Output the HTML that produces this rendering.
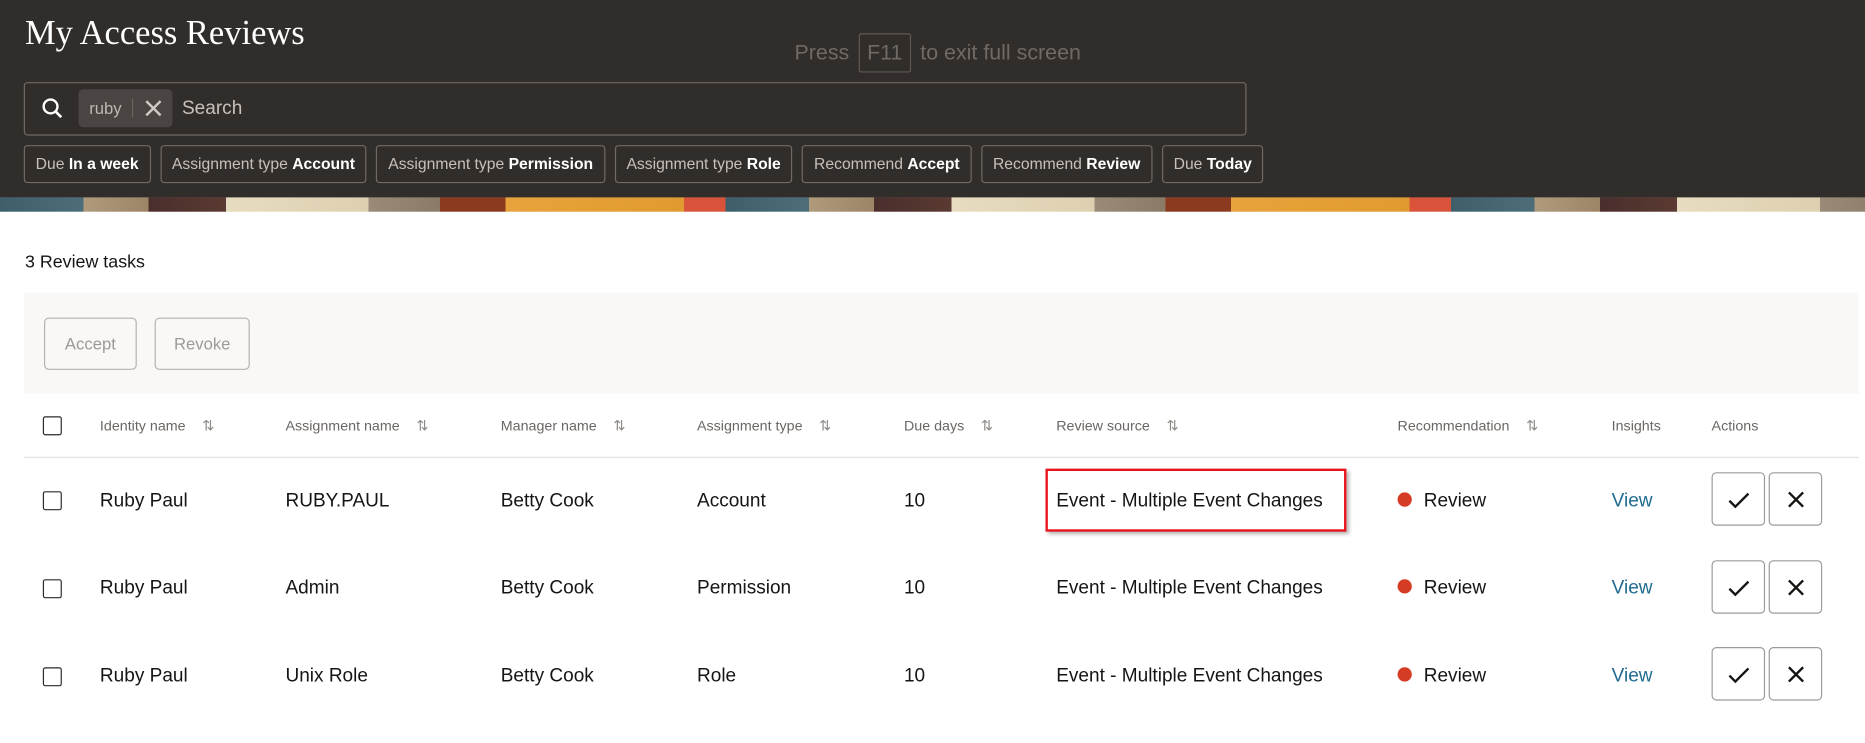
<!DOCTYPE html>
<html><head><meta charset="utf-8"><style>
html,body{margin:0;padding:0;background:#fff;overflow:hidden}
#w{width:1568px;height:625px;transform:scale(1.18941);transform-origin:0 0;position:relative;font-family:"Liberation Sans",sans-serif}
.hdr{position:absolute;left:0;top:0;width:1568px;height:166px;background:#312d2a}
.title{position:absolute;left:21px;top:12px;font-family:"Liberation Serif",serif;font-size:29px;color:#fff}
.press{position:absolute;left:668px;top:28px;font-size:18px;color:#6f6a66}
.press span{display:inline-block;border:1px solid #5e5955;padding:5px 6px;margin:0 8px;border-radius:2px}
.search{position:absolute;left:20px;top:69px;width:1026px;height:43px;border:1px solid #6f6a66;border-radius:3px}
.chip{position:absolute;left:45px;top:5px;height:32px;width:79px;background:#4a4542;border-radius:4px;color:#bdb8b3;font-size:14px}
.filters{position:absolute;left:20px;top:122px;display:flex;gap:8px}
.f{border:1px solid #6f6a66;border-radius:3px;height:30px;line-height:30px;padding:0 9px;font-size:13.2px;color:#c6c1bc;white-space:nowrap}
.f b{color:#fff}
.strip{position:absolute;left:0;top:166px;width:1568px;height:12px;background:repeating-linear-gradient(90deg,#3e5f6a 0,#4d6e78 70px,#b09a7c 70px,#9c8566 125px,#4a2e2c 125px,#5a3a32 190px,#e8dcc0 190px,#ddd0b0 310px,#9a8a78 310px,#8a7a66 370px,#8a3a1e 370px,#8a3a1e 425px,#e8a33c 425px,#e09a30 575px,#d9533a 575px,#d9533a 610px)}
.cnt{position:absolute;left:21px;top:212px;font-size:15px;color:#161513}
.tb{position:absolute;left:20px;top:246px;width:1543px;height:85px;background:#f9f8f6}
.btn{position:absolute;top:21px;height:42px;border:1px solid #b5b1ad;border-radius:4px;color:#9d9995;font-size:14px;line-height:42px;text-align:center}
.cb{position:absolute;left:36px;width:14px;height:14px;border:1.5px solid #2e2b29;border-radius:2px}
.th{position:absolute;top:351px;font-size:12px;color:#6a6663}
.sort{color:#8e8a86;font-size:12px;margin-left:14px}
.line{position:absolute;left:20px;top:384px;width:1543px;height:1px;background:#e4e1dd}
.td{position:absolute;font-size:16px;color:#161513}
.dot{display:inline-block;width:12px;height:12px;border-radius:50%;background:#d63b25;margin-right:10px;vertical-align:0px}
.ab{position:absolute;width:43px;height:43px;border:1px solid #9e9a96;border-radius:4px;background:#fff}
.ab svg{position:absolute;left:12px;top:12px}
.view{color:#1f6b91}
</style></head><body><div id="w">
<div class="hdr">
<div class="title">My Access Reviews</div>
<div class="press">Press<span>F11</span>to exit full screen</div>
<div class="search">
<svg style="position:absolute;left:14px;top:12px" width="18" height="18" viewBox="0 0 18 18"><circle cx="7.5" cy="7.5" r="5.8" fill="none" stroke="#fff" stroke-width="2"/><path d="M11.8 11.8L16.5 16.5" stroke="#fff" stroke-width="2.2"/></svg>
<div class="chip"><span style="position:absolute;left:9px;top:8px">ruby</span><span style="position:absolute;left:45px;top:8px;width:1px;height:16px;background:#6a6561"></span><svg style="position:absolute;left:56px;top:9px" width="14" height="14" viewBox="0 0 14 14"><path d="M1 1L13 13M13 1L1 13" stroke="#cfcac5" stroke-width="2"/></svg></div>
<span style="position:absolute;left:132px;top:13px;font-size:16px;color:#c6c1bc">Search</span>
</div>
<div class="filters">
<div class="f">Due <b>In a week</b></div>
<div class="f">Assignment type <b>Account</b></div>
<div class="f">Assignment type <b>Permission</b></div>
<div class="f">Assignment type <b>Role</b></div>
<div class="f">Recommend <b>Accept</b></div>
<div class="f">Recommend <b>Review</b></div>
<div class="f">Due <b>Today</b></div>
</div>
</div>
<div class="strip"></div>
<div class="cnt">3 Review tasks</div>
<div class="tb"><div class="btn" style="left:17px;width:76px">Accept</div><div class="btn" style="left:110px;width:78px">Revoke</div></div>
<div class="cb" style="top:350px"></div>
<div class="th" style="left:84px">Identity name<span class="sort">⇅</span></div>
<div class="th" style="left:240px">Assignment name<span class="sort">⇅</span></div>
<div class="th" style="left:421px">Manager name<span class="sort">⇅</span></div>
<div class="th" style="left:586px">Assignment type<span class="sort">⇅</span></div>
<div class="th" style="left:760px">Due days<span class="sort">⇅</span></div>
<div class="th" style="left:888px">Review source<span class="sort">⇅</span></div>
<div class="th" style="left:1175px">Recommendation<span class="sort">⇅</span></div>
<div class="th" style="left:1355px">Insights</div>
<div class="th" style="left:1439px">Actions</div>
<div class="line"></div>
<div style="position:absolute;left:879px;top:394px;width:249px;height:49px;border:2px solid #e8141a;box-shadow:2px 2px 3px rgba(0,0,0,.3)"></div>

<div class="cb" style="top:413px"></div>
<div class="td" style="left:84px;top:413px">Ruby Paul</div><div class="td" style="left:240px;top:413px">RUBY.PAUL</div><div class="td" style="left:421px;top:413px">Betty Cook</div><div class="td" style="left:586px;top:413px">Account</div><div class="td" style="left:760px;top:413px">10</div><div class="td" style="left:888px;top:413px">Event - Multiple Event Changes</div><div class="td" style="left:1175px;top:413px"><span class="dot"></span>Review</div><div class="td view" style="left:1355px;top:413px">View</div>
<div class="ab" style="left:1439px;top:397px"><svg width="20" height="20" viewBox="0 0 20 20"><path d="M2 11L7 16L18 5" fill="none" stroke="#161513" stroke-width="2"/></svg></div>
<div class="ab" style="left:1487px;top:397px"><svg width="20" height="20" viewBox="0 0 20 20"><path d="M4 4L16 16M16 4L4 16" stroke="#161513" stroke-width="2"/></svg></div>

<div class="cb" style="top:487px"></div>
<div class="td" style="left:84px;top:486px">Ruby Paul</div><div class="td" style="left:240px;top:486px">Admin</div><div class="td" style="left:421px;top:486px">Betty Cook</div><div class="td" style="left:586px;top:486px">Permission</div><div class="td" style="left:760px;top:486px">10</div><div class="td" style="left:888px;top:486px">Event - Multiple Event Changes</div><div class="td" style="left:1175px;top:486px"><span class="dot"></span>Review</div><div class="td view" style="left:1355px;top:486px">View</div>
<div class="ab" style="left:1439px;top:471px"><svg width="20" height="20" viewBox="0 0 20 20"><path d="M2 11L7 16L18 5" fill="none" stroke="#161513" stroke-width="2"/></svg></div>
<div class="ab" style="left:1487px;top:471px"><svg width="20" height="20" viewBox="0 0 20 20"><path d="M4 4L16 16M16 4L4 16" stroke="#161513" stroke-width="2"/></svg></div>

<div class="cb" style="top:561px"></div>
<div class="td" style="left:84px;top:560px">Ruby Paul</div><div class="td" style="left:240px;top:560px">Unix Role</div><div class="td" style="left:421px;top:560px">Betty Cook</div><div class="td" style="left:586px;top:560px">Role</div><div class="td" style="left:760px;top:560px">10</div><div class="td" style="left:888px;top:560px">Event - Multiple Event Changes</div><div class="td" style="left:1175px;top:560px"><span class="dot"></span>Review</div><div class="td view" style="left:1355px;top:560px">View</div>
<div class="ab" style="left:1439px;top:544px"><svg width="20" height="20" viewBox="0 0 20 20"><path d="M2 11L7 16L18 5" fill="none" stroke="#161513" stroke-width="2"/></svg></div>
<div class="ab" style="left:1487px;top:544px"><svg width="20" height="20" viewBox="0 0 20 20"><path d="M4 4L16 16M16 4L4 16" stroke="#161513" stroke-width="2"/></svg></div>
</div></body></html>
